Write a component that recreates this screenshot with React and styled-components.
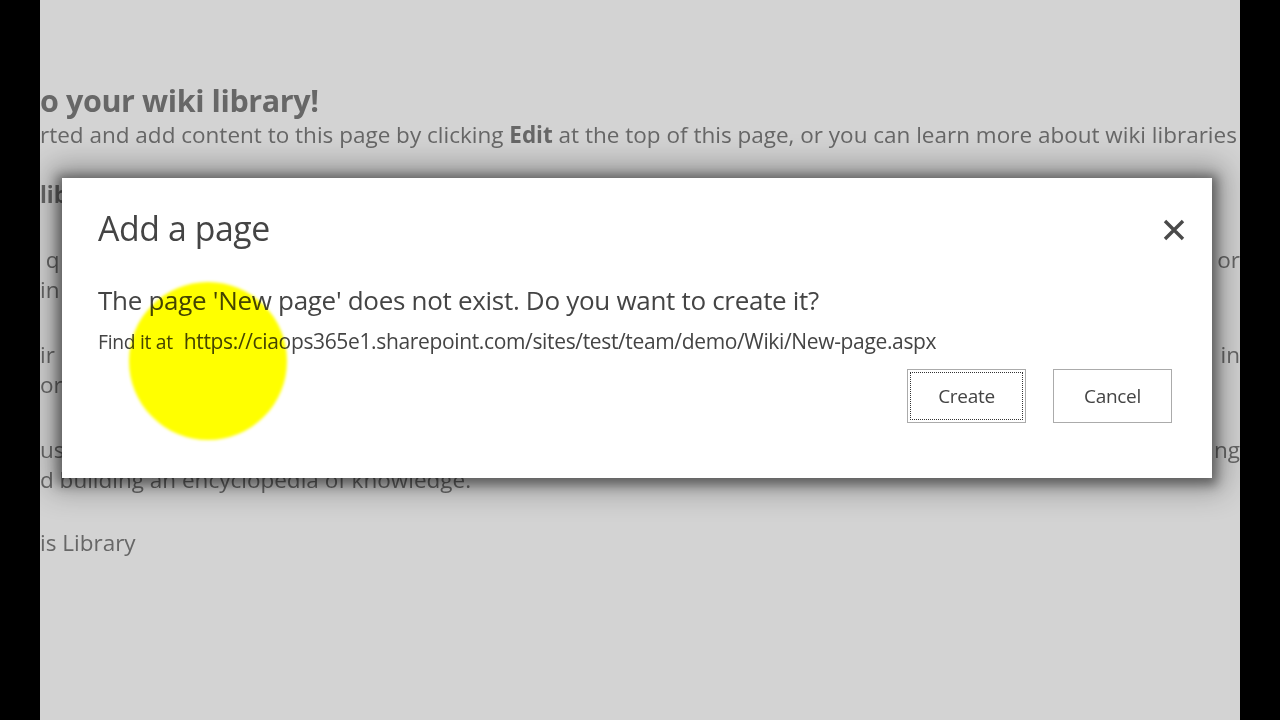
import styled, { createGlobalStyle } from "styled-components";

const Global = createGlobalStyle`
  body {
    margin: 0;
    background: #000;
  }
`;

const Stage = styled.div`
  display: flex;
  width: 1280px;
  height: 720px;
  background: #000;
`;

const Page = styled.main`
  position: relative;
  width: 1200px;
  margin: 0 40px;
  padding-top: 85px;
  box-sizing: border-box;
  background: #d3d3d3;
  overflow: hidden;
  font-family: "Open Sans", "Noto Sans", sans-serif;
  color: #676767;
`;

const Line = styled.div`
  display: flex;
  justify-content: space-between;
  height: 30px;
  line-height: 30px;
  margin-top: ${(p) => p.$gap || 0}px;
  font-size: ${(p) => p.$size || 22.5}px;
  font-weight: ${(p) => (p.$bold ? 700 : 400)};
  white-space: nowrap;
  letter-spacing: ${(p) => p.$spacing || 0}px;

  b {
    font-weight: 700;
  }
`;

const Dialog = styled.section`
  position: absolute;
  left: 22px;
  top: 178px;
  width: 1150px;
  height: 300px;
  box-sizing: border-box;
  padding: 26px 36px 0;
  background: #fff;
  box-shadow: 0 2px 10px 5px rgba(0, 0, 0, 0.4), 0 0 28px 12px rgba(0, 0, 0, 0.3);
  color: #444;
`;

const Header = styled.div`
  display: flex;
  justify-content: space-between;
  align-items: flex-start;
`;

const Title = styled.h2`
  margin: 0;
  font-size: 33.8px;
  font-weight: 400;
  line-height: 48px;
  letter-spacing: -0.4px;
  color: #444;
`;

const Close = styled.button`
  all: unset;
  width: 24px;
  height: 24px;
  margin-top: 14px;
  margin-right: -10px;
  display: grid;
  place-items: center;
`;

const Message = styled.p`
  margin: 33px 0 0;
  font-size: 26px;
  line-height: 30px;
  letter-spacing: -0.3px;
`;

const Location = styled.p`
  margin: 13px 0 0;
  display: flex;
  align-items: baseline;
  gap: 11px;
  font-size: 19.3px;
  line-height: 26px;
  letter-spacing: -0.3px;
`;

const Url = styled.span`
  font-size: 21px;
  letter-spacing: -0.35px;
`;

const Actions = styled.div`
  display: flex;
  justify-content: flex-end;
  gap: 27px;
  margin-top: 14px;
  margin-right: 4px;
`;

const Button = styled.button`
  position: relative;
  width: 119px;
  height: 54px;
  border: 1px solid #ababab;
  background: #fff;
  font-family: "Open Sans", "Noto Sans", sans-serif;
  font-size: 19px;
  letter-spacing: -0.3px;
  color: #444;

  ${(p) =>
    p.$focused &&
    `
    &::after {
      content: "";
      position: absolute;
      inset: 2px;
      border: 1px dotted #333;
    }
  `}
`;

const Highlight = styled.div`
  position: absolute;
  left: 89px;
  top: 282px;
  width: 158px;
  height: 158px;
  border-radius: 50%;
  background: #ffff00;
  mix-blend-mode: multiply;
  filter: blur(1.5px);
  pointer-events: none;
`;

export default function App() {
  return (
    <>
      <Global />
      <Stage>
        <Page>
          <Line $size={30.5} $bold $spacing={-0.4}>
            o your wiki library!
          </Line>
          <Line $gap={5}>
            <span>
              rted and add content to this page by clicking <b>Edit</b> at the top of this page, or you
              can learn more about wiki libraries
            </span>
          </Line>
          <Line $gap={30} $bold>
            lib
          </Line>
          <Line $gap={35}>
            <span>&nbsp;q</span>
            <span>or</span>
          </Line>
          <Line>in</Line>
          <Line $gap={35}>
            <span>ir</span>
            <span>in</span>
          </Line>
          <Line>or</Line>
          <Line $gap={35}>
            <span>us</span>
            <span>ng</span>
          </Line>
          <Line>d building an encyclopedia of knowledge.</Line>
          <Line $gap={33}>is Library</Line>

          <Dialog>
            <Header>
              <Title>Add a page</Title>
              <Close aria-label="Close">
                <svg width="22" height="22" viewBox="0 0 22 22">
                  <path
                    d="M2 2 L20 20 M20 2 L2 20"
                    stroke="#4a4a4a"
                    strokeWidth="3.4"
                    strokeLinecap="butt"
                  />
                </svg>
              </Close>
            </Header>
            <Message>The page 'New page' does not exist. Do you want to create it?</Message>
            <Location>
              Find it at
              <Url>https://ciaops365e1.sharepoint.com/sites/test/team/demo/Wiki/New-page.aspx</Url>
            </Location>
            <Actions>
              <Button $focused>Create</Button>
              <Button>Cancel</Button>
            </Actions>
          </Dialog>

          <Highlight />
        </Page>
      </Stage>
    </>
  );
}
